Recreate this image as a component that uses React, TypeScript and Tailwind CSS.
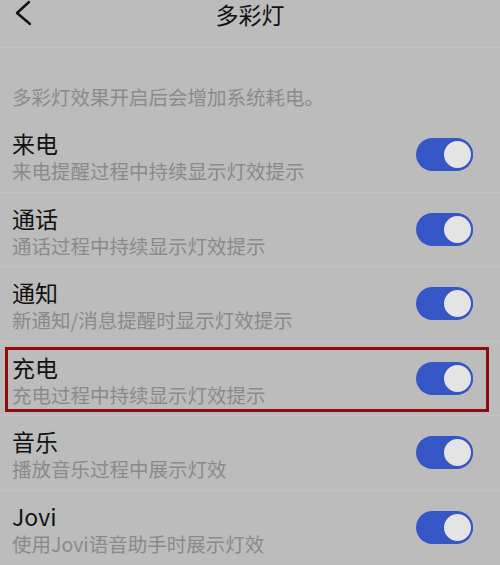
const rows = [
  { title: "来电", desc: "来电提醒过程中持续显示灯效提示" },
  { title: "通话", desc: "通话过程中持续显示灯效提示" },
  { title: "通知", desc: "新通知/消息提醒时显示灯效提示" },
  { title: "充电", desc: "充电过程中持续显示灯效提示", marked: true },
  { title: "音乐", desc: "播放音乐过程中展示灯效" },
  { title: "Jovi", desc: "使用Jovi语音助手时展示灯效" },
];

function Toggle() {
  return (
    <div className="flex h-[33px] w-[57px] items-center justify-end rounded-full bg-[#3656c6]">
      <div className="h-[31px] w-[31px] rounded-full border-2 border-[#3656c6] bg-[#e4e4e4]" />
    </div>
  );
}

export default function App() {
  return (
    <div
      className="h-[565px] w-[500px] overflow-hidden bg-[#bcbcbc]"
      style={{ fontFamily: '"Noto Sans CJK SC", "Noto Sans", sans-serif' }}
    >
      <header className="relative flex h-[48px] items-start justify-center border-b border-[#c3c3c3]">
        <svg
          className="absolute left-[12px] top-0"
          width="24"
          height="28"
          viewBox="0 0 24 28"
          fill="none"
          stroke="#111"
          strokeWidth="2.4"
          strokeLinecap="round"
          strokeLinejoin="round"
        >
          <path d="M17 2 L5 13 L18 24" />
        </svg>
        <h1 className="pt-[1px] text-[23px] leading-[26px] text-[#111]">多彩灯</h1>
      </header>
      <p className="px-[12px] pt-[38px] pb-[9px] text-[19.5px] leading-[22px] text-[#8a8a8a]">
        多彩灯效果开启后会增加系统耗电。
      </p>
      <div>
        {rows.map((row, i) => (
          <div
            key={row.title}
            className={`relative flex h-[74.5px] items-center justify-between pl-[12px] pr-[27px] ${
              i > 0 ? "border-t border-[#c3c3c3]" : ""
            }`}
          >
            <div className="pt-[2px]">
              <div className="text-[23px] leading-[30px] text-[#111]">{row.title}</div>
              <div className="text-[19.5px] leading-[25px] text-[#8a8a8a]">{row.desc}</div>
            </div>
            <Toggle />
            {row.marked ? (
              <div className="absolute left-[5px] right-[11px] top-[5px] bottom-[3px] border-[3px] border-[#8e0c0c]" />
            ) : null}
          </div>
        ))}
      </div>
    </div>
  );
}
